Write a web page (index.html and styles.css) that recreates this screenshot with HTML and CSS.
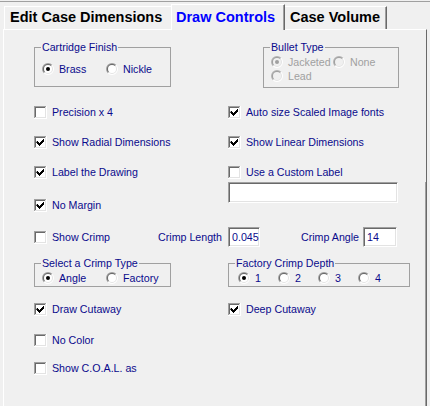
FILE: index.html
```html
<!DOCTYPE html>
<html lang="en">
<head>
<meta charset="utf-8">
<title>Draw Controls</title>
<link rel="stylesheet" href="styles.css">
</head>
<body>
<svg class="defs" width="0" height="0" aria-hidden="true">
  <symbol id="cb" viewBox="0 0 13 13">
    <path d="M0 0h13v1H1v12H0z" fill="#a0a0a0"/>
    <path d="M12 0h1v13H0v-1h12z" fill="#fff"/>
    <path d="M1 1h11v1H2v10H1z" fill="#696969"/>
    <path d="M11 1h1v11H1v-1h10z" fill="#e3e3e3"/>
    <rect x="2" y="2" width="9" height="9" fill="#fff"/>
  </symbol>
  <symbol id="tick" viewBox="0 0 13 13">
    <path d="M3 5h1v1h1v1h1v-1h1v-1h1v-1h1v-1h1v3h-1v1h-1v1h-1v1h-1v1h-1v-1h-1v-1h-1v-1h-1z" fill="#000"/>
  </symbol>
  <symbol id="rb" viewBox="0 0 12 12">
    <path d="M1.757 10.243A6 6 0 0 1 10.243 1.757Z" fill="#a0a0a0"/>
    <path d="M10.243 1.757A6 6 0 0 1 1.757 10.243Z" fill="#fff"/>
    <path d="M2.464 9.536A5 5 0 0 1 9.536 2.464Z" fill="#696969"/>
    <path d="M9.536 2.464A5 5 0 0 1 2.464 9.536Z" fill="#e3e3e3"/>
    <circle cx="6" cy="6" r="4" fill="#fff"/>
  </symbol>
  <symbol id="rb-dis" viewBox="0 0 12 12">
    <path d="M1.757 10.243A6 6 0 0 1 10.243 1.757Z" fill="#b4b4b4"/>
    <path d="M10.243 1.757A6 6 0 0 1 1.757 10.243Z" fill="#fff"/>
    <path d="M2.464 9.536A5 5 0 0 1 9.536 2.464Z" fill="#a0a0a0"/>
    <path d="M9.536 2.464A5 5 0 0 1 2.464 9.536Z" fill="#e3e3e3"/>
    <circle cx="6" cy="6" r="4" fill="#f0f0f0"/>
  </symbol>
  <symbol id="dot" viewBox="0 0 12 12">
    <circle cx="6" cy="6" r="2" fill="#000"/>
  </symbol>
  <symbol id="dot-dis" viewBox="0 0 12 12">
    <circle cx="6" cy="6" r="2" fill="#a0a0a0"/>
  </symbol>
</svg>

<div class="topline"></div>

<div class="tabs">
  <div class="tab tab-edit">Edit Case Dimensions</div>
  <div class="tab tab-active">Draw Controls</div>
  <div class="tab tab-case">Case Volume</div>
</div>

<div class="panel">
  <div class="row row-groups">
    <fieldset class="group group-finish">
      <legend>Cartridge Finish</legend>
      <div class="radios radios-two">
        <label class="radio"><svg><use href="#rb"/><use href="#dot"/></svg>Brass</label>
        <label class="radio"><svg><use href="#rb"/></svg>Nickle</label>
      </div>
    </fieldset>
    <fieldset class="group group-bullet">
      <legend>Bullet Type</legend>
      <div class="radios radios-bullet">
        <label class="radio disabled"><svg><use href="#rb-dis"/><use href="#dot-dis"/></svg>Jacketed</label>
        <label class="radio disabled"><svg><use href="#rb-dis"/></svg>None</label>
        <label class="radio disabled"><svg><use href="#rb-dis"/></svg>Lead</label>
      </div>
    </fieldset>
  </div>

  <div class="row row-first">
    <label class="check"><svg><use href="#cb"/></svg>Precision x 4</label>
    <label class="check"><svg><use href="#cb"/><use href="#tick"/></svg>Auto size Scaled Image fonts</label>
  </div>

  <div class="row row-next">
    <label class="check"><svg><use href="#cb"/><use href="#tick"/></svg>Show Radial Dimensions</label>
    <label class="check"><svg><use href="#cb"/><use href="#tick"/></svg>Show Linear Dimensions</label>
  </div>

  <div class="row row-next">
    <div class="stack">
      <label class="check"><svg><use href="#cb"/><use href="#tick"/></svg>Label the Drawing</label>
      <label class="check check-margin"><svg><use href="#cb"/><use href="#tick"/></svg>No Margin</label>
    </div>
    <div class="stack">
      <label class="check"><svg><use href="#cb"/></svg>Use a Custom Label</label>
      <input class="field field-custom" type="text" value="">
    </div>
  </div>

  <div class="row row-crimp">
    <div class="crimp-left">
      <label class="check"><svg><use href="#cb"/></svg>Show Crimp</label>
      <span class="crimp-label">Crimp Length</span>
    </div>
    <div class="crimp-right">
      <input class="field field-len" type="text" value="0.045">
      <span class="crimp-label crimp-angle">Crimp Angle</span>
      <input class="field field-angle" type="text" value="14">
    </div>
  </div>

  <div class="row row-groups2">
    <fieldset class="group group-type">
      <legend>Select a Crimp Type</legend>
      <div class="radios radios-two">
        <label class="radio"><svg><use href="#rb"/><use href="#dot"/></svg>Angle</label>
        <label class="radio"><svg><use href="#rb"/></svg>Factory</label>
      </div>
    </fieldset>
    <fieldset class="group group-depth">
      <legend>Factory Crimp Depth</legend>
      <div class="radios radios-four">
        <label class="radio"><svg><use href="#rb"/><use href="#dot"/></svg>1</label>
        <label class="radio"><svg><use href="#rb"/></svg>2</label>
        <label class="radio"><svg><use href="#rb"/></svg>3</label>
        <label class="radio"><svg><use href="#rb"/></svg>4</label>
      </div>
    </fieldset>
  </div>

  <div class="row row-cutaway">
    <label class="check"><svg><use href="#cb"/><use href="#tick"/></svg>Draw Cutaway</label>
    <label class="check"><svg><use href="#cb"/><use href="#tick"/></svg>Deep Cutaway</label>
  </div>

  <div class="row row-color">
    <label class="check"><svg><use href="#cb"/></svg>No Color</label>
  </div>

  <div class="row row-coal">
    <label class="check"><svg><use href="#cb"/></svg>Show C.O.A.L. as</label>
  </div>
</div>
</body>
</html>
```
FILE: styles.css
```css
* {
  box-sizing: border-box;
}

html,
body {
  margin: 0;
  padding: 0;
  background: #f0f0f0;
  overflow: hidden;
}

body {
  width: 430px;
  height: 406px;
  font-family: "Liberation Sans", Arial, sans-serif;
  font-size: 10.667px;
  color: #0a0a8c;
}

.defs {
  position: absolute;
  width: 0;
  height: 0;
  overflow: hidden;
}

.topline {
  height: 1px;
  margin-top: 1px;
  background: #a0a0a0;
}

/* Tabs */
.tabs {
  display: flex;
  align-items: flex-start;
  height: 26px;
  margin: 2px 0 -1px 4px;
  position: relative;
  z-index: 1;
  font-size: 14.5px;
  font-weight: bold;
  line-height: 17px;
  color: #000;
}

.tab {
  height: 23px;
  margin-top: 2px;
  border-top: 1px solid #fff;
  padding: 2px 0 0 5px;
  white-space: nowrap;
  overflow: hidden;
}

.tab-edit {
  width: 167px;
  border-left: 1px solid #fff;
}

.tab-active {
  width: 114px;
  height: 26px;
  margin-top: 0;
  padding: 4px 0 0 4px;
  border-left: 1px solid #fff;
  border-right: 1px solid #696969;
  box-shadow: inset -1px 0 #a0a0a0;
  background: #f0f0f0;
  color: #0000ff;
}

.tab-case {
  width: 102px;
  border-right: 1px solid #696969;
  box-shadow: inset -1px 0 #a0a0a0;
}

/* Panel */
.panel {
  position: relative;
  margin-left: 3px;
  width: 424px;
  height: 390px;
  border-top: 1px solid #fff;
  border-left: 1px solid #fff;
  border-right: 1px solid #696969;
  padding: 11px 0 0 30px;
}

.panel::after {
  content: "";
  position: absolute;
  right: 0;
  top: 152px;
  bottom: 0;
  width: 1px;
  background: #a0a0a0;
}

.row {
  display: grid;
  grid-template-columns: 194px 1fr;
  align-items: start;
}

.row-first { margin-top: 18px; }
.row-next { margin-top: 17px; }
.row-crimp { margin-top: 15px; height: 20px; }
.row-groups2 { margin-top: 10px; }
.row-cutaway { margin-top: 16px; }
.row-color { margin-top: 18px; }
.row-coal { margin-top: 15px; }

.stack {
  display: flex;
  flex-direction: column;
  align-items: flex-start;
}

/* Checkboxes */
.check {
  display: flex;
  align-items: center;
  height: 13px;
  line-height: 13px;
  white-space: nowrap;
}

.check svg {
  width: 13px;
  height: 13px;
  margin-right: 5px;
  flex: none;
}

.check-margin {
  margin-top: 20px;
}

/* Radios */
.radio {
  display: flex;
  align-items: center;
  height: 12px;
  line-height: 12px;
  white-space: nowrap;
}

.radio svg {
  width: 12px;
  height: 12px;
  margin-right: 5px;
  flex: none;
}

.radio.disabled {
  color: #a0a0a0;
}

.radios {
  display: grid;
  row-gap: 2px;
}

.radios-two {
  grid-template-columns: 64px auto;
}

.radios-bullet {
  grid-template-columns: 62px auto;
}

.radios-four {
  grid-template-columns: repeat(4, 40px);
}

/* Group boxes */
.group {
  margin: 0;
  min-width: 0;
  border: 1px solid #a0a0a0;
  padding: 0 0 0 7px;
  justify-self: start;
}

.group legend {
  margin-left: -1px;
  padding: 0 1px;
  line-height: 13px;
  color: #0a0a8c;
}

.group-finish {
  width: 137px;
  padding-top: 9px;
  padding-bottom: 11px;
}

.group-bullet {
  width: 136px;
  margin-left: 35px;
  padding-top: 2px;
  padding-bottom: 5px;
}

.group-type {
  width: 137px;
  padding-top: 2px;
  padding-bottom: 2px;
}

.group-depth {
  width: 182px;
  padding: 2px 0 2px 9px;
}

.group-depth legend {
  margin-left: -3px;
}

/* Text fields */
.field {
  display: block;
  height: 20px;
  margin: 0;
  border: 1px solid;
  border-color: #a0a0a0 #fff #fff #a0a0a0;
  box-shadow: inset 1px 1px #696969, inset -1px -1px #e3e3e3;
  background: #fff;
  font: inherit;
  color: inherit;
  padding: 0 0 0 3px;
  outline: none;
  border-radius: 0;
}

.field-custom {
  width: 170px;
  height: 21px;
  margin-top: 3px;
}

.field-len {
  width: 32px;
}

.field-angle {
  width: 34px;
  margin-left: 4px;
}

/* Crimp row */
.crimp-left {
  display: flex;
  align-items: flex-start;
  justify-content: space-between;
  padding: 4px 6px 0 0;
  height: 20px;
}

.crimp-label {
  line-height: 13px;
  white-space: nowrap;
}

.crimp-right {
  display: flex;
  align-items: center;
  height: 20px;
}

.crimp-angle {
  margin-left: 41px;
}
```
